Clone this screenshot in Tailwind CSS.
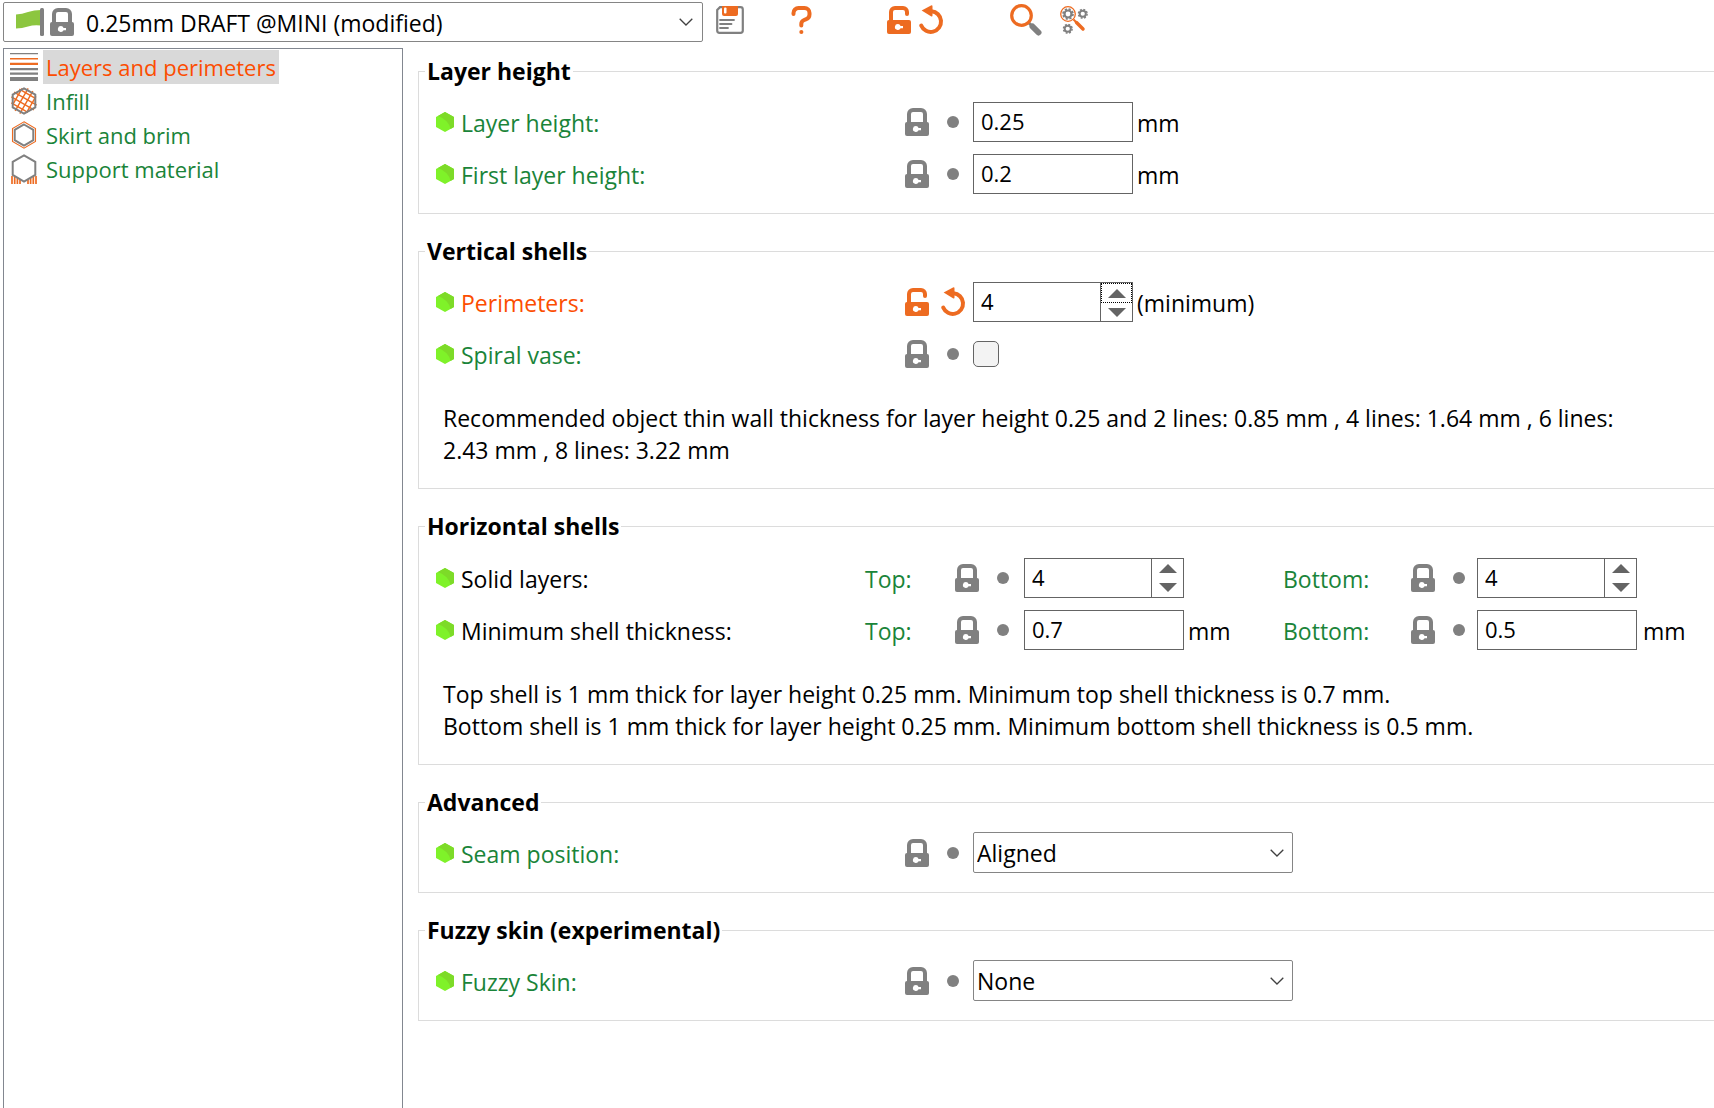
<!DOCTYPE html>
<html lang="en">
<head>
  <meta charset="UTF-8" />
  <meta name="viewport" content="width=device-width, initial-scale=1.0" />
  <title>Print Settings</title>
  <script src="https://cdn.jsdelivr.net/npm/@tailwindcss/browser@4"></script>
</head>
<body class="flex flex-col min-h-screen overflow-x-hidden bg-white text-black text-[23px] leading-8 font-['Open_Sans','Noto_Sans',sans-serif]">

  <!-- shared icons -->
  <svg class="hidden">
    <symbol id="lock" viewBox="0 0 24 28">
      <path d="M4 15V6a4 4 0 0 1 4-4h8a4 4 0 0 1 4 4v9" fill="none" stroke="currentColor" stroke-width="4" />
      <rect y="14" width="24" height="14" rx="2" fill="currentColor" />
      <path d="M11 18a3 3 0 1 0 2.6 4.3H16v-2.4h-2.4A3 3 0 0 0 11 18z" fill="#fff" />
    </symbol>
    <symbol id="unlock" viewBox="0 0 24 28">
      <path d="M4 15V6a4 4 0 0 1 4-4h8a4 4 0 0 1 4 4v2" fill="none" stroke="currentColor" stroke-width="4" stroke-linecap="round" />
      <rect y="14" width="24" height="14" rx="2" fill="currentColor" />
      <path d="M11 18a3 3 0 1 0 2.6 4.3H16v-2.4h-2.4A3 3 0 0 0 11 18z" fill="#fff" />
    </symbol>
    <symbol id="undo" viewBox="-1 1 26 30">
      <path d="M11 7.3h1.5a10.300 10.300 0 1 1-10.300 14.200" fill="none" stroke="currentColor" stroke-width="4" stroke-linecap="round" />
      <path d="M2.600 6.600 12 1.400q1.500-.7 1.500 1v9q0 1.500-1.500.8z" fill="currentColor" />
    </symbol>
    <symbol id="dot" viewBox="0 0 26 30">
      <circle cx="13" cy="15" r="6" fill="currentColor" />
    </symbol>
    <symbol id="hex" viewBox="0 0 18 20">
      <path d="M9 0l9 5v10l-9 5-9-5V5z" fill="#7ff229" />
      <path d="M9 0l9 5v10l-3.500 2Q13 8 2 4z" fill="#7ddb28" />
    </symbol>
    <symbol id="chevron" viewBox="0 0 14 8">
      <path d="M.7.7 7 7l6.300-6.300" fill="none" stroke="#404040" stroke-width="1.300" />
    </symbol>
    <symbol id="up" viewBox="0 0 18 9"><path d="M9 0l9 9H0z" fill="#646464" /></symbol>
    <symbol id="down" viewBox="0 0 18 9"><path d="M9 9l9-9H0z" fill="#646464" /></symbol>
    <symbol id="gear" viewBox="0 0 12 12">
      <circle cx="6" cy="6" r="3.500" fill="none" stroke="#808080" stroke-width="2.200" />
      <circle cx="6" cy="6" r="5" fill="none" stroke="#808080" stroke-width="1.700" stroke-dasharray="2.200 1.730" />
    </symbol>
  </svg>

  <!-- toolbar -->
  <header class="flex items-start pt-[2px] pl-[3px]">
    <div class="relative flex items-center w-[700px] h-10 border border-[#858585] rounded-xs">
      <svg class="ml-3 w-7 h-7" viewBox="0 0 28 28">
        <path d="M0 6.500Q6 6 12 4t13-2v15.500q-7-1-13 1t-12 2z" fill="#8cc63f" />
        <rect x="24" width="4" height="28" rx="1.500" fill="#808080" />
      </svg>
      <svg class="ml-[6px] w-6 h-7 text-[#808080]"><use href="#lock" /></svg>
      <select aria-label="Print preset" class="flex-1 appearance-none h-full pl-3 pt-[2px] outline-none">
        <option>0.25mm DRAFT @MINI (modified)</option>
      </select>
      <svg class="absolute right-[9px] w-[14px] h-2 pointer-events-none"><use href="#chevron" /></svg>
    </div>
    <button aria-label="Save preset" class="mt-1 ml-[13px]">
      <svg class="w-7 h-7" viewBox="0 0 28 28">
        <path d="M4 1.200h20.500a2.300 2.300 0 0 1 2.300 2.300v21a2.300 2.300 0 0 1-2.300 2.300h-21a2.300 2.300 0 0 1-2.300-2.300V4z" fill="none" stroke="#808080" stroke-width="2.200" />
        <path d="M6 0h16v8q0 2-2 2H8q-2 0-2-2z" fill="#ed6b21" />
        <rect x="8" y="1.500" width="2.500" height="6" rx="1" fill="#fff" />
        <path d="M4 14h14M4 18h11.500M4 22h8" stroke="#808080" stroke-width="1.800" stroke-linecap="round" />
      </svg>
    </button>
    <button aria-label="Help" class="mt-1 ml-[47px]">
      <svg class="w-[21px] h-7" viewBox="0 0 21 28" fill="none" stroke="#ed6b21" stroke-width="4" stroke-linecap="round">
        <path d="M2.500 8V7a5 5 0 0 1 5-5h6a5 5 0 0 1 5 5v1.500a5 5 0 0 1-3.200 4.600l-2.600 1.200a4 4 0 0 0-2.400 3.700v1.500" />
        <path d="M10.300 26h.1" />
      </svg>
    </button>
    <button aria-label="Unlock" class="mt-1 ml-[75px]">
      <svg class="w-6 h-7 text-[#ed6b21]"><use href="#unlock" /></svg>
    </button>
    <button aria-label="Undo changes" class="mt-[3px] ml-[7px]">
      <svg class="w-[26px] h-[30px] text-[#ed6b21]"><use href="#undo" /></svg>
    </button>
    <button aria-label="Search" class="mt-[2px] ml-[66px]">
      <svg class="w-8 h-8" viewBox="0 0 32 32">
        <path d="M18 18l5 5" stroke="#808080" stroke-width="3" />
        <path d="M22.500 22.500l6 6" stroke="#808080" stroke-width="6" stroke-linecap="round" />
        <circle cx="11.500" cy="11.500" r="9.800" fill="none" stroke="#ed6b21" stroke-width="3.200" />
      </svg>
    </button>
    <button aria-label="Compare presets" class="mt-1 ml-[18px]">
      <svg class="w-7 h-7" viewBox="0 0 28 28">
        <use href="#gear" x="2" y="2" width="12" height="12" />
        <use href="#gear" x="17.500" y="2.500" width="10.500" height="10.500" />
        <use href="#gear" x="2.500" y="17.500" width="10.500" height="10.500" />
        <circle cx="8" cy="8" r="7.300" fill="none" stroke="#ed6b21" stroke-width="1.300" />
        <path d="M13.500 13.500l3 3" stroke="#ed6b21" stroke-width="2" />
        <path d="M16.500 16.500l6.500 6.500" stroke="#ed6b21" stroke-width="3.500" stroke-linecap="round" />
      </svg>
    </button>
  </header>

  <div class="flex flex-1 mt-[6px] pl-[3px]">
    <!-- page tree -->
    <nav class="shrink-0 w-[400px] pt-px pl-[6px] border border-b-0 border-[#828790] text-[22px] text-[#1a8439]">
      <a href="#" class="flex items-center h-[34px] text-[#fc4d01]">
        <svg class="w-7 h-7" viewBox="0 0 28 28">
          <path d="M0 0h28v1.300H0zM0 15h28v2.300H0zM0 19.500h28v2.300H0zM0 24h28v4H0z" fill="#808080" />
          <path d="M0 5h28v1.500H0zM0 9.800h28v2.300H0z" fill="#ed6b21" />
        </svg>
        <span class="ml-[5px] h-[34px] px-[3px] pt-px bg-[#d9d9d9]">Layers and perimeters</span>
      </a>
      <a href="#" class="flex items-center h-[34px]">
        <svg class="w-7 h-7" viewBox="0 0 28 28" fill="none">
          <g transform="rotate(30 14 14)" stroke="#ed6b21" stroke-width="1.400">
            <path d="M4 6h19M1 11.300h26M1 16.700h26M4 22h19" />
            <path d="M6 4v19M11.300 1v26M16.700 1v26M22 4v19" />
          </g>
          <path d="M14 1.300l11.300 6.400v12.600L14 26.700 2.700 20.300V7.700z" stroke="#808080" stroke-width="2" />
        </svg>
        <span class="ml-[5px] h-[34px] px-[3px] pt-px">Infill</span>
      </a>
      <a href="#" class="flex items-center h-[34px]">
        <svg class="w-7 h-7" viewBox="0 0 28 28" fill="none">
          <path d="M14 .8l11.500 6.700v13L14 27.200 2.500 20.500v-13z" stroke="#ed6b21" stroke-width="1.100" />
          <path d="M14 3.500l9.300 5.300v10.400L14 24.500l-9.300-5.300V8.800z" stroke="#808080" stroke-width="2" />
        </svg>
        <span class="ml-[5px] h-[34px] px-[3px] pt-px">Skirt and brim</span>
      </a>
      <a href="#" class="flex items-center h-[34px]">
        <svg class="w-7 h-[30px]" viewBox="0 0 28 30" fill="none">
          <path d="M2 22v8M4.700 22v8M7.400 23v7M10 26v4M26 22v8M23.300 22v8M20.600 23v7M18 26v4" stroke="#ed6b21" stroke-width="1.700" />
          <path d="M14 1.300l11.300 6.600v13L14 27.500 2.700 20.900v-13z" fill="#fff" stroke="#808080" stroke-width="2" />
        </svg>
        <span class="ml-[5px] h-[34px] px-[3px] pt-px">Support material</span>
      </a>
    </nav>

    <!-- option groups -->
    <main class="flex-1 flex flex-col gap-[21px] pt-[7px] pl-[15px]">
      <fieldset class="border border-r-0 border-[#dcdcdc] pl-[6px] pb-[19px]">
        <legend class="px-[2px] font-bold">Layer height</legend>
        <div class="flex flex-col gap-3 pt-[15px] pl-[11px]">
          <div class="flex items-center h-10">
            <svg class="w-[18px] h-5"><use href="#hex" /></svg>
            <label for="layer-height" class="w-[444px] ml-[7px] pt-[2px] text-[#1a8439]">Layer height:</label>
            <svg class="w-6 h-7 text-[#808080]"><use href="#lock" /></svg>
            <svg class="w-[26px] h-[30px] ml-[11px] text-[#808080]"><use href="#dot" /></svg>
            <input id="layer-height" type="text" value="0.25" class="w-40 h-10 ml-[7px] px-[7px] pb-[2px] border border-[#646464] text-[22px] outline-none" />
            <span class="ml-1 pt-[2px]">mm</span>
          </div>
          <div class="flex items-center h-10">
            <svg class="w-[18px] h-5"><use href="#hex" /></svg>
            <label for="first-layer-height" class="w-[444px] ml-[7px] pt-[2px] text-[#1a8439]">First layer height:</label>
            <svg class="w-6 h-7 text-[#808080]"><use href="#lock" /></svg>
            <svg class="w-[26px] h-[30px] ml-[11px] text-[#808080]"><use href="#dot" /></svg>
            <input id="first-layer-height" type="text" value="0.2" class="w-40 h-10 ml-[7px] px-[7px] pb-[2px] border border-[#646464] text-[22px] outline-none" />
            <span class="ml-1 pt-[2px]">mm</span>
          </div>
        </div>
      </fieldset>

      <fieldset class="border border-r-0 border-[#dcdcdc] pl-[6px] pb-[19px]">
        <legend class="px-[2px] font-bold">Vertical shells</legend>
        <div class="flex flex-col gap-3 pt-[15px] pl-[11px]">
          <div class="flex items-center h-10">
            <svg class="w-[18px] h-5"><use href="#hex" /></svg>
            <label for="perimeters" class="w-[444px] ml-[7px] pt-[2px] text-[#fc4d01]">Perimeters:</label>
            <svg class="w-6 h-7 text-[#ed6b21]"><use href="#unlock" /></svg>
            <svg class="w-[26px] h-[30px] ml-[11px] text-[#ed6b21]"><use href="#undo" /></svg>
            <div class="flex w-40 h-10 ml-[7px] border border-[#646464]">
              <input id="perimeters" type="text" value="4" class="flex-1 min-w-0 px-[7px] pb-[2px] text-[22px] outline-none" />
              <div class="flex flex-col w-8 border-l border-[#646464]">
                <button aria-label="Increase perimeters" class="flex-1 flex items-center justify-center border border-dotted border-black"><svg class="w-[18px] h-[9px]"><use href="#up" /></svg></button>
                <button aria-label="Decrease perimeters" class="flex-1 flex items-center justify-center"><svg class="w-[18px] h-[9px]"><use href="#down" /></svg></button>
              </div>
            </div>
            <span class="ml-1 pt-[2px]">(minimum)</span>
          </div>
          <div class="flex items-center h-10">
            <svg class="w-[18px] h-5"><use href="#hex" /></svg>
            <label for="spiral-vase" class="w-[444px] ml-[7px] pt-[2px] text-[#1a8439]">Spiral vase:</label>
            <svg class="w-6 h-7 text-[#808080]"><use href="#lock" /></svg>
            <svg class="w-[26px] h-[30px] ml-[11px] text-[#808080]"><use href="#dot" /></svg>
            <input id="spiral-vase" type="checkbox" class="appearance-none w-[26px] h-[26px] ml-[7px] border border-[#646464] rounded-[5px] bg-[#f3f3f3]" />
          </div>
        </div>
        <p class="mt-7 mb-[3px] ml-[18px] mr-16">Recommended object thin wall thickness for layer height 0.25 and 2 lines: 0.85 mm , 4 lines: 1.64 mm , 6 lines: 2.43 mm , 8 lines: 3.22 mm</p>
      </fieldset>

      <fieldset class="border border-r-0 border-[#dcdcdc] pl-[6px] pb-[19px]">
        <legend class="px-[2px] font-bold">Horizontal shells</legend>
        <div class="flex flex-col gap-3 pt-4 pl-[11px]">
          <div class="flex items-center h-10">
            <svg class="w-[18px] h-5"><use href="#hex" /></svg>
            <span class="w-[404px] ml-[7px] pt-[2px]">Solid layers:</span>
            <label for="top-layers" class="w-[90px] pt-[2px] text-[#1a8439]">Top:</label>
            <svg class="w-6 h-7 text-[#808080]"><use href="#lock" /></svg>
            <svg class="w-[26px] h-[30px] ml-[11px] text-[#808080]"><use href="#dot" /></svg>
            <div class="flex w-40 h-10 ml-2 border border-[#646464]">
              <input id="top-layers" type="text" value="4" class="flex-1 min-w-0 px-[7px] pb-[2px] text-[22px] outline-none" />
              <div class="flex flex-col w-8 border-l border-[#646464]">
                <button aria-label="Increase top layers" class="flex-1 flex items-center justify-center"><svg class="w-[18px] h-[9px]"><use href="#up" /></svg></button>
                <button aria-label="Decrease top layers" class="flex-1 flex items-center justify-center"><svg class="w-[18px] h-[9px]"><use href="#down" /></svg></button>
              </div>
            </div>
            <label for="bottom-layers" class="w-[128px] ml-[99px] pt-[2px] text-[#1a8439]">Bottom:</label>
            <svg class="w-6 h-7 text-[#808080]"><use href="#lock" /></svg>
            <svg class="w-[26px] h-[30px] ml-[11px] text-[#808080]"><use href="#dot" /></svg>
            <div class="flex w-40 h-10 ml-[5px] border border-[#646464]">
              <input id="bottom-layers" type="text" value="4" class="flex-1 min-w-0 px-[7px] pb-[2px] text-[22px] outline-none" />
              <div class="flex flex-col w-8 border-l border-[#646464]">
                <button aria-label="Increase bottom layers" class="flex-1 flex items-center justify-center"><svg class="w-[18px] h-[9px]"><use href="#up" /></svg></button>
                <button aria-label="Decrease bottom layers" class="flex-1 flex items-center justify-center"><svg class="w-[18px] h-[9px]"><use href="#down" /></svg></button>
              </div>
            </div>
          </div>
          <div class="flex items-center h-10">
            <svg class="w-[18px] h-5"><use href="#hex" /></svg>
            <span class="w-[404px] ml-[7px] pt-[2px]">Minimum shell thickness:</span>
            <label for="top-thickness" class="w-[90px] pt-[2px] text-[#1a8439]">Top:</label>
            <svg class="w-6 h-7 text-[#808080]"><use href="#lock" /></svg>
            <svg class="w-[26px] h-[30px] ml-[11px] text-[#808080]"><use href="#dot" /></svg>
            <input id="top-thickness" type="text" value="0.7" class="w-40 h-10 ml-2 px-[7px] pb-[2px] border border-[#646464] text-[22px] outline-none" />
            <span class="w-[95px] ml-1 pt-[2px]">mm</span>
            <label for="bottom-thickness" class="w-[128px] pt-[2px] text-[#1a8439]">Bottom:</label>
            <svg class="w-6 h-7 text-[#808080]"><use href="#lock" /></svg>
            <svg class="w-[26px] h-[30px] ml-[11px] text-[#808080]"><use href="#dot" /></svg>
            <input id="bottom-thickness" type="text" value="0.5" class="w-40 h-10 ml-[5px] px-[7px] pb-[2px] border border-[#646464] text-[22px] outline-none" />
            <span class="ml-[6px] pt-[2px]">mm</span>
          </div>
        </div>
        <p class="mt-7 mb-[3px] ml-[18px] mr-16">Top shell is 1 mm thick for layer height 0.25 mm. Minimum top shell thickness is 0.7 mm.<br />Bottom shell is 1 mm thick for layer height 0.25 mm. Minimum bottom shell thickness is 0.5 mm.</p>
      </fieldset>

      <fieldset class="border border-r-0 border-[#dcdcdc] pl-[6px] pb-[19px]">
        <legend class="px-[2px] font-bold">Advanced</legend>
        <div class="pt-[14px] pl-[11px]">
          <div class="flex items-center h-[41px]">
            <svg class="w-[18px] h-5"><use href="#hex" /></svg>
            <label for="seam" class="w-[444px] ml-[7px] pt-[2px] text-[#1a8439]">Seam position:</label>
            <svg class="w-6 h-7 text-[#808080]"><use href="#lock" /></svg>
            <svg class="w-[26px] h-[30px] ml-[11px] text-[#808080]"><use href="#dot" /></svg>
            <div class="relative flex items-center ml-[7px]">
              <select id="seam" class="appearance-none w-80 h-[41px] pl-[3px] border border-[#858585] rounded-xs outline-none">
                <option>Aligned</option>
              </select>
              <svg class="absolute right-[9px] w-[14px] h-2 pointer-events-none"><use href="#chevron" /></svg>
            </div>
          </div>
        </div>
      </fieldset>

      <fieldset class="border border-r-0 border-[#dcdcdc] pl-[6px] pb-[19px]">
        <legend class="px-[2px] font-bold">Fuzzy skin (experimental)</legend>
        <div class="pt-[14px] pl-[11px]">
          <div class="flex items-center h-[41px]">
            <svg class="w-[18px] h-5"><use href="#hex" /></svg>
            <label for="fuzzy" class="w-[444px] ml-[7px] pt-[2px] text-[#1a8439]">Fuzzy Skin:</label>
            <svg class="w-6 h-7 text-[#808080]"><use href="#lock" /></svg>
            <svg class="w-[26px] h-[30px] ml-[11px] text-[#808080]"><use href="#dot" /></svg>
            <div class="relative flex items-center ml-[7px]">
              <select id="fuzzy" class="appearance-none w-80 h-[41px] pl-[3px] border border-[#858585] rounded-xs outline-none">
                <option>None</option>
              </select>
              <svg class="absolute right-[9px] w-[14px] h-2 pointer-events-none"><use href="#chevron" /></svg>
            </div>
          </div>
        </div>
      </fieldset>
    </main>
  </div>
</body>
</html>
